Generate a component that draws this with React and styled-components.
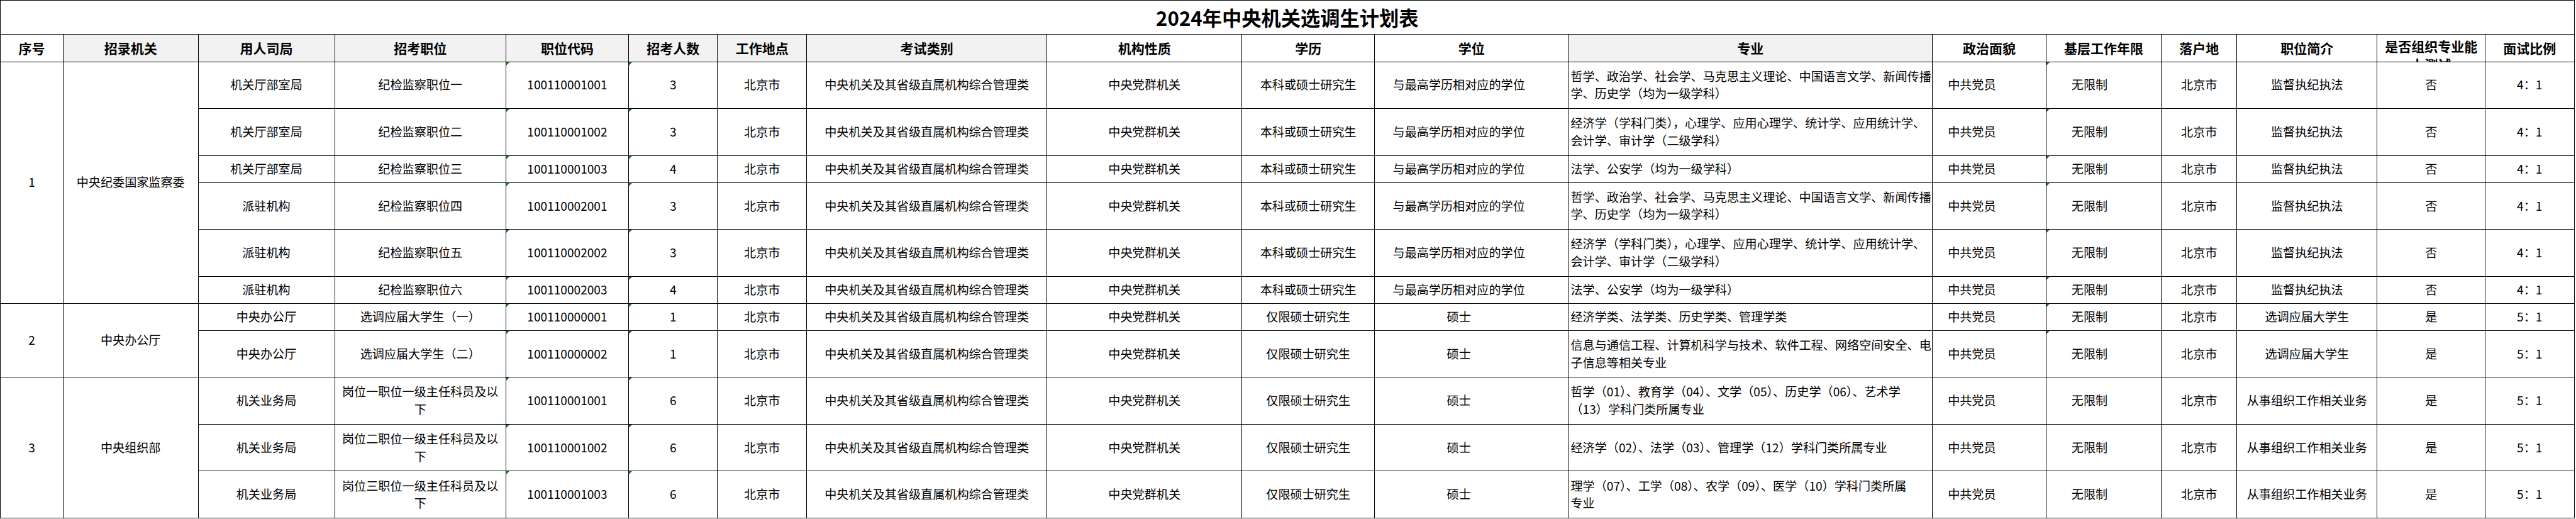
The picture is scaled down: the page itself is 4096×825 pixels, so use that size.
import styled, { createGlobalStyle, css } from "styled-components";

// the sheet was captured at 4282px wide; everything is drawn at 0.956 of that
const S = 0.956;
const px = (v) => `${(v * S).toFixed(2)}px`;

const COLS = [
  104.5, 224.5, 227, 285, 204, 148, 148, 400, 324, 221, 322, 606, 188.5, 192,
  125.5, 233.5, 179.5, 148,
];
const TALL = 78;
const SHORT = 45;

const GlobalStyle = createGlobalStyle`
  html, body {
    margin: 0;
    padding: 0;
    background: #ffffff;
  }
  body {
    font-family: "Noto Sans CJK SC", "Noto Sans", sans-serif;
    color: #000000;
  }
`;

const Sheet = styled.div`
  display: grid;
  grid-template-columns: ${({ $rows }) => COLS.map(px).join(" ")};
  grid-template-rows: ${({ $rows }) => $rows.map(px).join(" ")};
  width: max-content;
  border-top: 1px solid #000;
  border-left: 1px solid #000;
  box-sizing: border-box;
`;

const TitleCell = styled.div`
  grid-column: 1 / -1;
  display: flex;
  align-items: center;
  justify-content: center;
  border-right: 1px solid #000;
  border-bottom: 1px solid #000;
  font-size: ${px(32.7)};
  font-weight: 700;
  letter-spacing: 0;
`;

const Cell = styled.div`
  position: relative;
  box-sizing: border-box;
  display: flex;
  align-items: center;
  justify-content: ${({ $left }) => ($left ? "flex-start" : "center")};
  text-align: ${({ $left }) => ($left ? "left" : "center")};
  padding: 0 ${({ $padR }) => px($padR || 0)} 0 ${({ $padL }) => px($padL || 0)};
  border-right: 1px solid #000;
  border-bottom: 1px solid #000;
  font-size: ${px(20)};
  line-height: ${px(29)};
  white-space: pre;
  overflow: hidden;
  grid-row: ${({ $span }) => ($span ? `span ${$span}` : "auto")};

  ${({ $mark }) =>
    $mark &&
    css`
      &::before {
        content: "";
        position: absolute;
        top: 0;
        left: 0;
        border-top: 5px solid #12800f;
        border-right: 5px solid transparent;
      }
    `}
`;

const HeadCell = styled(Cell)`
  font-size: ${px(22)};
  font-weight: 700;
  background: ${({ $shade }) => ($shade ? "#f2f2f2" : "#ffffff")};
  ${({ $top }) =>
    $top &&
    css`
      align-items: flex-start;
      padding-top: ${px(3.5)};
      line-height: ${px(30.8)};
    `}
`;

const HEADERS = [
  { label: "序号" },
  { label: "招录机关", shade: true },
  { label: "用人司局", shade: true },
  { label: "招考职位", shade: true },
  { label: "职位代码", shade: true },
  { label: "招考人数", shade: true },
  { label: "工作地点", shade: true },
  { label: "考试类别", shade: true },
  { label: "机构性质" },
  { label: "学历" },
  { label: "学位" },
  { label: "专业", shade: true },
  { label: "政治面貌" },
  { label: "基层工作年限" },
  { label: "落户地" },
  { label: "职位简介" },
  { label: "是否组织专业能\n力测试", top: true },
  { label: "面试比例" },
];

const MAJOR_A =
  "哲学、政治学、社会学、马克思主义理论、中国语言文学、新闻传播\n学、历史学（均为一级学科）";
const MAJOR_B =
  "经济学（学科门类），心理学、应用心理学、统计学、应用统计学、\n会计学、审计学（二级学科）";
const MAJOR_C = "法学、公安学（均为一级学科）";

const EXAM = "中央机关及其省级直属机构综合管理类";

const jiwei = (dept, pos, code, count, major, h) => ({
  h,
  cells: [dept, pos, code, count, "北京市", EXAM, "中央党群机关", "本科或硕士研究生",
    "与最高学历相对应的学位", major, "中共党员", "无限制", "北京市", "监督执纪执法", "否", "4：1"],
});

const shuoshi = (dept, pos, code, count, major, intro, h, mark) => ({
  h,
  mark,
  cells: [dept, pos, code, count, "北京市", EXAM, "中央党群机关", "仅限硕士研究生",
    "硕士", major, "中共党员", "无限制", "北京市", intro, "是", "5：1"],
});

const GROUPS = [
  {
    no: "1",
    org: "中央纪委国家监察委",
    rows: [
      { ...jiwei("机关厅部室局", "纪检监察职位一", "100110001001", "3", MAJOR_A, TALL), mark: true },
      { ...jiwei("机关厅部室局", "纪检监察职位二", "100110001002", "3", MAJOR_B, TALL), mark: true },
      { ...jiwei("机关厅部室局", "纪检监察职位三", "100110001003", "4", MAJOR_C, SHORT), mark: true },
      { ...jiwei("派驻机构", "纪检监察职位四", "100110002001", "3", MAJOR_A, TALL), mark: true },
      { ...jiwei("派驻机构", "纪检监察职位五", "100110002002", "3", MAJOR_B, TALL), mark: true },
      { ...jiwei("派驻机构", "纪检监察职位六", "100110002003", "4", MAJOR_C, SHORT), mark: true },
    ],
  },
  {
    no: "2",
    org: "中央办公厅",
    rows: [
      shuoshi("中央办公厅", "选调应届大学生（一）", "100110000001", "1",
        "经济学类、法学类、历史学类、管理学类", "选调应届大学生", SHORT, true),
      shuoshi("中央办公厅", "选调应届大学生（二）", "100110000002", "1",
        "信息与通信工程、计算机科学与技术、软件工程、网络空间安全、电\n子信息等相关专业",
        "选调应届大学生", TALL, true),
    ],
  },
  {
    no: "3",
    org: "中央组织部",
    rows: [
      shuoshi("机关业务局", "岗位一职位一级主任科员及以\n下", "100110001001", "6",
        "哲学（01）、教育学（04）、文学（05）、历史学（06）、艺术学\n（13）学科门类所属专业",
        "从事组织工作相关业务", TALL, false),
      shuoshi("机关业务局", "岗位二职位一级主任科员及以\n下", "100110001002", "6",
        "经济学（02）、法学（03）、管理学（12）学科门类所属专业",
        "从事组织工作相关业务", TALL, false),
      shuoshi("机关业务局", "岗位三职位一级主任科员及以\n下", "100110001003", "6",
        "理学（07）、工学（08）、农学（09）、医学（10）学科门类所属\n专业",
        "从事组织工作相关业务", TALL, false),
    ],
  },
];

// per-column tweaks, indexed from 用人司局 (0) to 面试比例 (15)
const cellProps = (i, row) => {
  switch (i) {
    case 2:
    case 3:
      return { $mark: true };
    case 8:
      return { $padR: 42 };
    case 9:
      return { $left: true, $padL: 3.5 };
    case 10:
      return { $padR: 58 };
    case 11:
      return { $padR: 47, $mark: row.mark };
    default:
      return {};
  }
};

export default function App() {
  const rowHeights = [57, 45, ...GROUPS.flatMap((g) => g.rows.map((r) => r.h))];

  return (
    <>
      <GlobalStyle />
      <Sheet $rows={rowHeights}>
        <TitleCell>2024年中央机关选调生计划表</TitleCell>

        {HEADERS.map((h) => (
          <HeadCell key={h.label} $shade={h.shade} $top={h.top}>
            {h.label}
          </HeadCell>
        ))}

        {GROUPS.map((g) =>
          g.rows.map((row, ri) => (
            <Row key={`${g.no}-${ri}`} group={g} row={row} first={ri === 0} />
          ))
        )}
      </Sheet>
    </>
  );
}

function Row({ group, row, first }) {
  return (
    <>
      {first && <Cell $span={group.rows.length}>{group.no}</Cell>}
      {first && <Cell $span={group.rows.length}>{group.org}</Cell>}
      {row.cells.map((text, i) => (
        <Cell key={i} {...cellProps(i, row)}>
          {text}
        </Cell>
      ))}
    </>
  );
}
